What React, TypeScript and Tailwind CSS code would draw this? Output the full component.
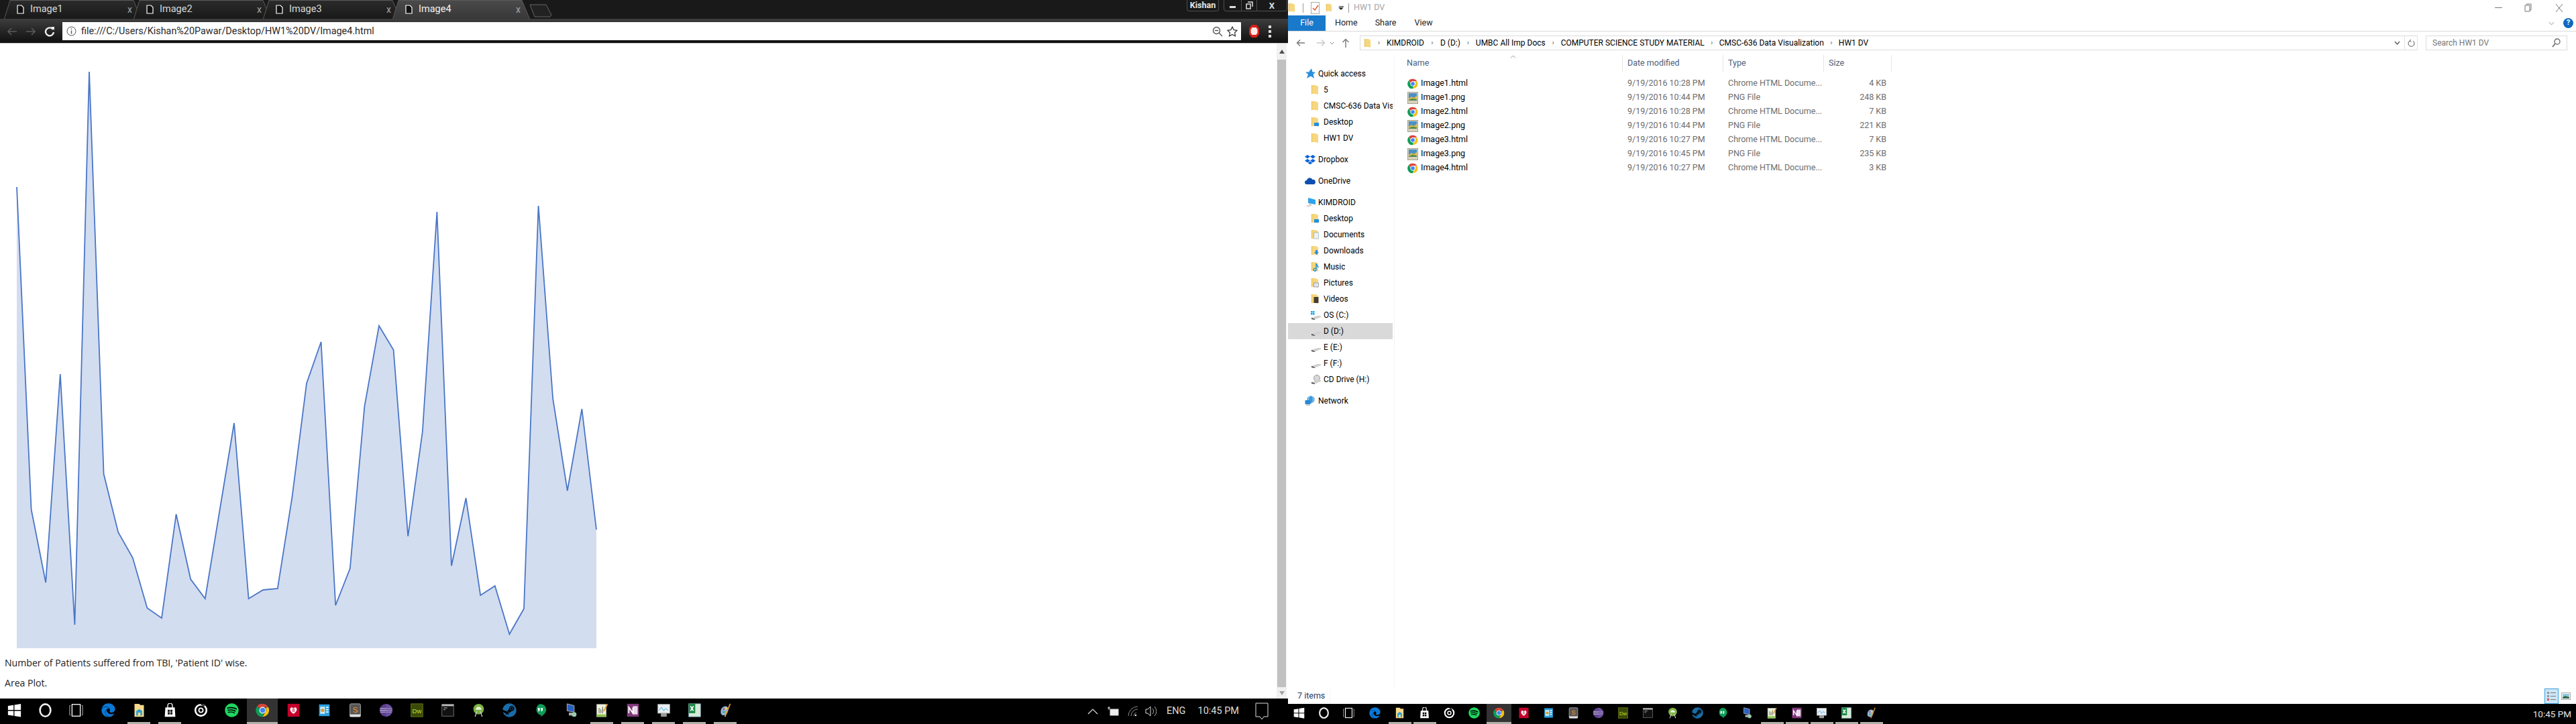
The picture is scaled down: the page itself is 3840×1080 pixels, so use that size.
import React from 'react';
import { FaEdge, FaSpotify, FaSteam } from 'react-icons/fa';

const ys = [279,760,869,558,932,107,707,794,832,907,922,767,864,893,762,631,893,880,878,742,572,510,903,848,606,486,522,800,644,316,844,743,888,874,946,908,307,595,732,610,790];
const pts = ys.map((y, i) => `${(25 + 21.6 * i).toFixed(1)},${y - 65}`).join(' ');

function ChromeIcon({ s = 16 }: { s?: number }) {
  return (
    <svg width={s} height={s} viewBox="0 0 24 24" className="shrink-0">
      <path d="M12 1a11 11 0 0 1 9.5 5.5H12a5.5 5.5 0 0 0-5 3.2L3.2 4.6A11 11 0 0 1 12 1z" fill="#db4437" />
      <path d="M21.5 6.5A11 11 0 0 1 12 23l4.6-7.9A5.5 5.5 0 0 0 17 8z" fill="#f4c20d" />
      <path d="M12 23A11 11 0 0 1 3.200 4.600L7.400 12a5.500 5.500 0 0 0 6.600 5z" fill="#0f9d58" />
      <circle cx="12" cy="12" r="5" fill="#4285f4" stroke="#fff" strokeWidth="1.300" />
    </svg>
  );
}

function PngIcon() {
  return (
    <svg width="16" height="18" viewBox="0 0 16 18" className="shrink-0">
      <rect x="0.500" y="0.500" width="15" height="17" fill="#d8d0bd" stroke="#a9a28f" />
      <rect x="2" y="2" width="12" height="11" fill="#4a90c8" />
      <path d="M2 10l4-3 3 2 5-3v7H2z" fill="#d8b94a" />
      <path d="M2 12l5-2 7 1v2H2z" fill="#4f8a4a" />
    </svg>
  );
}

function Folder({ w = 12, h = 16, overlay }: { w?: number; h?: number; overlay?: React.ReactNode }) {
  return (
    <svg width={w} height={h} viewBox="0 0 12 16" className="shrink-0">
      <path d="M1 1h6l4 2v12l-4-1H1z" fill="#f6d77f" />
      <path d="M1 1v13h1V1z" fill="#e6b84e" />
      {overlay}
    </svg>
  );
}

function SubIcon({ kind }: { kind: string }) {
  if (kind === 'desktop') return <Folder overlay={<rect x="5" y="9" width="7" height="5" fill="#1e90e8" />} />;
  if (kind === 'docs') return <Folder overlay={<rect x="4.500" y="5" width="7" height="9" fill="#eef2f6" stroke="#8aa" strokeWidth="0.600" />} />;
  if (kind === 'down') return <Folder overlay={<path d="M7 7h3v3h2l-3.500 4L5 10h2z" fill="#2a8ae0" />} />;
  if (kind === 'music') return <Folder overlay={<path d="M8 3c0 3 3 3 3 6M8 3v9a2 2 0 1 1-1-1.500" stroke="#1e90e8" strokeWidth="1.500" fill="none" />} />;
  if (kind === 'pics') return <Folder overlay={<rect x="4.500" y="8" width="7" height="6" fill="#dfe7ee" stroke="#778" strokeWidth="0.600" />} />;
  if (kind === 'vids') return <Folder overlay={<rect x="4.500" y="5" width="7" height="9" fill="#443c30" />} />;
  return <Folder />;
}

function Drive({ win, cd }: { win?: boolean; cd?: boolean }) {
  return (
    <svg width="16" height="16" viewBox="0 0 16 16" className="shrink-0">
      {win && <path d="M0 2h2.500v2.500H0zM3 2h2.500v2.500H3zM0 5h2.500v2.500H0zM3 5h2.500v2.500H3z" fill="#14a8ea" />}
      {cd && <circle cx="9" cy="6" r="4.500" fill="#d8d8d8" stroke="#999" />}
      <path d="M1 12l9-3h5v2L5 15 1 14z" fill="#d0d0d0" />
      <path d="M1 12l5 2v1l-5-1z" fill="#444" />
    </svg>
  );
}

function TopIcon({ kind }: { kind: string }) {
  if (kind === 'star')
    return (
      <svg width="16" height="18" viewBox="0 0 16 16" className="shrink-0">
        <path d="M10 0l1.500 5.500H16l-3.500 3.500 1.500 6-5-3.500L3 15l2-6-4-3.500h5z" fill="#2a8fdc" />
      </svg>
    );
  if (kind === 'dropbox')
    return (
      <svg width="16" height="16" viewBox="0 0 16 16" className="shrink-0">
        <path d="M4 1l4 2.500L4 6.500 0 3.700zM12 1l4 2.700-4 2.800-4-3zM4 7l4 2.800L4 12.500 0 9.800zM12 7l4 2.800-4 2.700-4-2.700zM4.500 13L8 10.800 11.500 13 8 15.200z" fill="#0d62d6" />
      </svg>
    );
  if (kind === 'onedrive')
    return (
      <svg width="16" height="12" viewBox="0 0 16 12" className="shrink-0">
        <path d="M3 11a3 3 0 0 1 0-6 4.500 4.500 0 0 1 8.500-1A3.500 3.500 0 0 1 13 11z" fill="#0d4fae" />
      </svg>
    );
  if (kind === 'pc')
    return (
      <svg width="17" height="16" viewBox="0 0 17 16" className="shrink-0">
        <path d="M5 1l11 3v7L5 9z" fill="#2ea3e8" />
        <path d="M1 13l8-2 3 1-7 3z" fill="#d8d8d8" />
        <path d="M7 9v3h2v-3z" fill="#bbb" />
      </svg>
    );
  return (
    <svg width="16" height="16" viewBox="0 0 16 16" className="shrink-0">
      <circle cx="9" cy="6" r="5.500" fill="#3d9cdc" />
      <path d="M7 1c-2 3-2 7 0 10M11 1c2 3 2 7 0 10" stroke="#cfe8f7" strokeWidth="0.800" fill="none" />
      <rect x="0.500" y="7" width="8" height="6" fill="#2b87d6" />
      <rect x="2" y="13.500" width="6" height="1.500" fill="#bbb" />
    </svg>
  );
}

function TaskIcon({ name, s }: { name: string; s: number }) {
  const t = 'Liberation Sans, sans-serif';
  switch (name) {
    case 'win':
      return <svg width={s} height={s} viewBox="0 0 24 24"><path d="M1 4.500l9.500-1.500v8.500H1zM12 2.800L23 1v10.500H12zM1 13h9.500v8.500L1 20zM12 13h11v10.500L12 21.700z" fill="#fff" /></svg>;
    case 'cortana':
      return <svg width={s} height={s} viewBox="0 0 24 24"><ellipse cx="12" cy="12" rx="9" ry="10.500" fill="none" stroke="#eee" strokeWidth="3" /></svg>;
    case 'task':
      return <svg width={s} height={s} viewBox="0 0 24 24"><rect x="5" y="2" width="14" height="20" fill="none" stroke="#fff" strokeWidth="1.500" /><path d="M2.500 4H1v16h1.500M21.500 4H23v16h-1.500" fill="none" stroke="#ccc" /></svg>;
    case 'edge':
      return <FaEdge size={s} color="#0a78d7" />;
    case 'explorer':
      return <svg width={s} height={s} viewBox="0 0 24 24"><path d="M4 1h8l2 2h6v20H4z" fill="#f7d98a" /><path d="M7 21V13l5-3 5 3v8h-3v-5h-4v5z" fill="#2aa0d8" /></svg>;
    case 'store':
      return <svg width={s} height={s} viewBox="0 0 24 24"><path d="M4 7h16l1 16H3z" fill="#fff" /><path d="M8 8V4a4 4 0 0 1 8 0v4" fill="none" stroke="#fff" strokeWidth="1.500" /><path d="M8 11h3.500v3.500H8zM12.500 11H16v3.500h-3.500zM8 15.500h3.500V19H8zM12.500 15.500H16V19h-3.500z" fill="#000" /></svg>;
    case 'groove':
      return <svg width={s} height={s} viewBox="0 0 24 24"><circle cx="12" cy="12" r="9.500" fill="none" stroke="#fff" strokeWidth="3" /><circle cx="12" cy="12" r="3.500" fill="none" stroke="#fff" strokeWidth="2" /><path d="M12 1l6 4" stroke="#000" strokeWidth="2" /></svg>;
    case 'spotify':
      return <FaSpotify size={s} color="#1ed760" />;
    case 'chrome':
      return <ChromeIcon s={s} />;
    case 'iheart':
      return <svg width={s} height={s} viewBox="0 0 24 24"><rect x="2" y="1" width="20" height="22" fill="#c6002b" /><path d="M12 18c-8-5-6-11-3-11 2 0 3 2 3 2s1-2 3-2c3 0 5 6-3 11z" fill="#fff" /><path d="M11 9v6M13 9v6" stroke="#c6002b" /></svg>;
    case 'outlook':
      return <svg width={s} height={s} viewBox="0 0 24 24"><rect x="3" y="2" width="18" height="20" fill="#2a9fe0" /><rect x="5" y="6" width="8" height="12" fill="#cdebf8" /><circle cx="9" cy="12" r="3" fill="#e09a30" /><path d="M15 7h4M15 11h4M15 15h4" stroke="#fff" strokeWidth="2" /></svg>;
    case 'sublime':
      return <svg width={s} height={s} viewBox="0 0 24 24"><rect x="3" y="1" width="18" height="22" rx="2" fill="#555" stroke="#bbb" /><rect x="3" y="19" width="18" height="4" fill="#ddd" /><text x="12" y="16" fontSize="13" fontFamily={t} fill="#f59a23" textAnchor="middle">S</text></svg>;
    case 'eclipse':
      return <svg width={s} height={s} viewBox="0 0 24 24"><circle cx="12" cy="12" r="11" fill="#5b3f8f" /><path d="M1.500 9h21M1.500 12h21M2 15h20" stroke="#ddd" /><path d="M12 1a11 11 0 0 1 0 22" fill="#7a5fb0" opacity="0.500" /></svg>;
    case 'dw':
      return <svg width={s} height={s} viewBox="0 0 24 24"><rect x="2" y="1" width="20" height="22" fill="#3a4a08" stroke="#6d7f1a" /><text x="12" y="17" fontSize="11" fontFamily={t} fill="#c6dd33" textAnchor="middle">Dw</text></svg>;
    case 'cmd':
      return <svg width={s} height={s} viewBox="0 0 24 24"><rect x="2" y="2" width="20" height="20" fill="#111" stroke="#777" /><rect x="2" y="2" width="20" height="3" fill="#bbb" /><path d="M5 8h6M5 11h3" stroke="#ddd" /></svg>;
    case 'android':
      return <svg width={s} height={s} viewBox="0 0 24 24"><circle cx="12" cy="10" r="9" fill="#7cb342" /><path d="M7 11a5 5 0 0 1 10 0z" fill="#e8f0d8" /><path d="M9 14l-3 9M15 14l3 9" stroke="#ccc" strokeWidth="1.500" /></svg>;
    case 'steam':
      return <FaSteam size={s} color="#1b6ca8" />;
    case 'hangouts':
      return <svg width={s} height={s} viewBox="0 0 24 24"><path d="M12 1a10 10 0 0 1 10 10c0 5-5 9-9 12v-3a9.500 9.500 0 0 1-1 0 10 10 0 0 1 0-19z" fill="#0f9d58" /><path d="M8 8h3v4l-1.500 2H8l1-2H8zM13 8h3v4l-1.500 2H13l1-2h-1z" fill="#fff" /></svg>;
    case 'monitor':
      return <svg width={s} height={s} viewBox="0 0 24 24"><path d="M5 1l12 3v11L5 13z" fill="#2a60c0" stroke="#bbb" /><path d="M8 16h8v5H8z" fill="#aaa" /><circle cx="17" cy="19" r="4" fill="#9ca" /></svg>;
    case 'notepad':
      return <svg width={s} height={s} viewBox="0 0 24 24"><rect x="3" y="2" width="16" height="21" fill="#eef3d8" stroke="#aaa" /><path d="M7 8v9M10 10v7M13 6v11" stroke="#444" /><path d="M3 19h16v4H3z" fill="#8bc34a" /><path d="M20 1l2 1-6 12-2-1z" fill="#e09a30" /></svg>;
    case 'onenote':
      return <svg width={s} height={s} viewBox="0 0 24 24"><rect x="2" y="1" width="20" height="22" fill="#80397b" /><rect x="12" y="5" width="8" height="14" fill="#e8d8e6" /><path d="M5 17V7l7 10V7" stroke="#fff" strokeWidth="2" fill="none" /></svg>;
    case 'chart':
      return <svg width={s} height={s} viewBox="0 0 24 24"><rect x="2" y="2" width="20" height="15" fill="#e8eef2" stroke="#bbb" /><path d="M4 12l4-5 4 6 3-4 4 3" stroke="#2a9fe0" fill="none" /><path d="M7 17h10v6H7z" fill="#9a9a9a" /></svg>;
    case 'excel':
      return <svg width={s} height={s} viewBox="0 0 24 24"><rect x="2" y="1" width="20" height="22" fill="#d5ead8" stroke="#8ab" /><path d="M2 1h11v16H2z" fill="#1e8a48" /><path d="M5 5l5 8M10 5l-5 8" stroke="#fff" strokeWidth="2" /></svg>;
    default:
      return <svg width={s} height={s} viewBox="0 0 24 24"><path d="M12 5c-6 0-9 6-8 12 1 4 7 5 10 1 4-5 4-13-2-13z" fill="#8fb4d8" /><circle cx="9" cy="10" r="1.500" fill="#e33" /><circle cx="13" cy="9" r="1.500" fill="#fd3" /><circle cx="9" cy="15" r="1.500" fill="#3a3" /><path d="M20 1l-9 22" stroke="#e09a30" strokeWidth="2" /></svg>;
  }
}

const taskNames = ['win','cortana','task','edge','explorer','store','groove','spotify','chrome','iheart','outlook','sublime','eclipse','dw','cmd','android','steam','hangouts','monitor','notepad','onenote','chart','excel','paint'];
const running = ['explorer','store','chrome','notepad','onenote','chart','excel','paint'];

function TaskSlot({ name, w, s, h }: { name: string; w: string; s: number; h: string }) {
  const active = name === 'chrome';
  const on = running.includes(name);
  const shift = name === 'win' || name === 'cortana' || name === 'task' ? 'pr-1' : '';
  return (
    <div className={`${w} ${h} flex flex-col items-center ${active ? 'bg-[#333333]' : ''}`}>
      <div className={`flex-1 flex items-center justify-center ${shift}`}>
        <TaskIcon name={name} s={s} />
      </div>
      <div className={`h-[3px] w-[34px] ${on ? 'bg-[#b0b0a8]' : ''} ${active ? 'w-full' : ''}`} />
    </div>
  );
}

function Tab({ label, active, first }: { label: string; active?: boolean; first?: boolean }) {
  return (
    <div className={`relative h-[28px] w-[205px] flex items-center shrink-0 ${first ? '' : '-ml-[12px]'} ${active ? 'z-10' : ''}`}>
      <svg width="205" height="28" className="absolute inset-0">
        <defs>
          <linearGradient id={active ? 'tabA' : 'tabI'} x1="0" y1="0" x2="0" y2="1">
            <stop offset="0" stopColor={active ? '#4a4a4a' : '#2b2b2b'} />
            <stop offset="1" stopColor={active ? '#383838' : '#191919'} />
          </linearGradient>
        </defs>
        <path d="M0.500 28L9 0.500H193L204.500 28" fill={`url(#${active ? 'tabA' : 'tabI'})`} stroke="#5a5a5a" />
      </svg>
      <svg width="11" height="14" viewBox="0 0 11 14" className="relative ml-[19px] shrink-0">
        <path d="M1 1h6l3 3v9H1z" fill="#111" stroke="#fff" strokeWidth="1.200" />
      </svg>
      <span className={`relative ml-[9px] text-[14.5px] font-[Roboto] ${active ? 'text-[#f2f2f2]' : 'text-[#d8d8d8]'}`}>{label}</span>
      <span className="relative ml-auto mr-[14px] text-[14px] text-[#a8a8a8] font-[Roboto]">x</span>
    </div>
  );
}

function Chrome() {
  return (
    <div className="w-[1920px] h-[1042px] flex flex-col shrink-0 font-[Roboto]">
      <div className="h-[28px] bg-[#191919] flex items-start pl-[6px] shrink-0">
        <Tab label="Image1" first />
        <Tab label="Image2" />
        <Tab label="Image3" />
        <Tab label="Image4" active />
        <svg width="36" height="22" viewBox="0 0 36 22" className="mt-[6px] ml-[-1px]">
          <path d="M1 1h24l8 15-2 3H8z" fill="#222" stroke="#666" />
        </svg>
        <div className="ml-auto flex items-start pr-[1px]">
          <div className="w-[48px] h-[17px] rounded-b-[4px] border border-t-0 border-[#4d4d4d] text-[12.5px] font-bold text-[#e6e6e6] flex items-center justify-center">Kishan</div>
          <div className="ml-[7px] w-[95px] h-[17px] rounded-b-[4px] border border-t-0 border-[#4d4d4d] flex items-center text-[#ddd]">
            <div className="w-[25px] flex justify-center"><div className="w-[9px] h-[3px] bg-[#ddd] mt-[5px]" /></div>
            <div className="w-[24px] h-full border-x border-[#4d4d4d] flex justify-center items-center">
              <svg width="11" height="12" viewBox="0 0 11 12"><path d="M3 1h7v7M1 4h6v7H1z" fill="none" stroke="#ddd" strokeWidth="1.500" /></svg>
            </div>
            <div className="flex-1 text-center text-[13px] font-bold leading-none">X</div>
          </div>
        </div>
      </div>
      <div className="h-[37px] shrink-0 bg-gradient-to-b from-[#3e3e3e] to-[#101010] border-b border-[#c8c8c8] flex items-start pt-[5px]">
        <div className="w-[93px] h-[27px] flex items-center shrink-0">
          <svg width="16" height="14" viewBox="0 0 16 14" className="ml-[10px]"><path d="M15 7H2M7 2L2 7l5 5" stroke="#5a5a5a" strokeWidth="1.600" fill="none" /></svg>
          <svg width="16" height="14" viewBox="0 0 16 14" className="ml-[12px]"><path d="M1 7h13M9 2l5 5-5 5" stroke="#5a5a5a" strokeWidth="1.600" fill="none" /></svg>
          <svg width="16" height="16" viewBox="0 0 16 16" className="ml-[12px]"><path d="M13 5a6 6 0 1 0 1 4" stroke="#eee" strokeWidth="2.400" fill="none" /><path d="M10 1h5v5z" fill="#eee" /></svg>
        </div>
        <div className="w-[1757px] h-[27px] bg-white flex items-center rounded-r-[1px] shrink-0">
          <svg width="15" height="15" viewBox="0 0 15 15" className="ml-[6px]"><circle cx="7.500" cy="7.500" r="6.500" fill="none" stroke="#555" /><path d="M7.500 6.500v5M7.500 3.500v1.500" stroke="#555" strokeWidth="1.400" /></svg>
          <span className="ml-[7px] text-[14.4px] text-[#2b2b2b] whitespace-nowrap">file:///C:/Users/Kishan%20Pawar/Desktop/HW1%20DV/Image4.html</span>
          <svg width="16" height="16" viewBox="0 0 16 16" className="ml-auto"><circle cx="6.500" cy="6.500" r="5" fill="none" stroke="#555" strokeWidth="1.400" /><path d="M4 6.500h5M10 10l5 5" stroke="#555" strokeWidth="1.400" /></svg>
          <svg width="16" height="16" viewBox="0 0 16 16" className="ml-[6px] mr-[5px]"><path d="M8 1l2.200 4.600 5 .7-3.600 3.500.9 5L8 12.400l-4.500 2.400.9-5L.8 6.300l5-.7z" fill="none" stroke="#333" strokeWidth="1.200" /></svg>
        </div>
        <div className="flex-1 flex items-center h-[27px]">
          <svg width="17" height="21" viewBox="0 0 17 21" className="ml-[11px]"><path d="M5 1h7l4 5v9l-4 5H5l-4-5V6z" fill="#d8201a" /><path d="M5.500 5h6l2 3v5l-2 3h-6l-2-3V8z" fill="#fff" opacity="0.900" /></svg>
          <div className="ml-[13px] flex flex-col gap-[3px]">
            <div className="w-[4px] h-[4px] bg-[#ddd]" /><div className="w-[4px] h-[4px] bg-[#ddd]" /><div className="w-[4px] h-[4px] bg-[#ddd]" />
          </div>
        </div>
      </div>
      <div className="flex-1 flex bg-white min-h-0">
        <div className="w-[1903px] flex flex-col shrink-0">
          <svg width="892" height="903" className="block">
            <polygon points={`25,902 ${pts} 889,902`} fill="#d3ddf0" />
            <polyline points={pts} fill="none" stroke="#4a76c7" strokeWidth="1.800" />
          </svg>
          <p className="ml-[7px] mt-[11px] text-[14.1px] leading-[20px] text-[#222] font-['Open_Sans'] whitespace-nowrap">Number of Patients suffered from TBI, 'Patient ID' wise.</p>
          <p className="ml-[7px] mt-[10px] text-[14.1px] leading-[20px] text-[#222] font-['Open_Sans']">Area Plot.</p>
        </div>
        <div className="w-[17px] bg-[#f1f1f1] flex flex-col items-center shrink-0 border-r-2 border-white">
          <div className="h-[24px] flex items-center justify-center shrink-0 text-[#505050]">
            <div className="w-0 h-0 border-x-[4px] border-x-transparent border-b-[6px] border-b-[#505050]" />
          </div>
          <div className="flex-1 w-[13px] bg-[#c1c1c1]" />
          <div className="h-[17px] flex items-center justify-center shrink-0">
            <div className="w-0 h-0 border-x-[4px] border-x-transparent border-t-[6px] border-t-[#a3a3a3]" />
          </div>
        </div>
      </div>
    </div>
  );
}

const files: [string, string, string, string][] = [
  ['Image1.html','9/19/2016 10:28 PM','Chrome HTML Docume...','4 KB'],
  ['Image1.png','9/19/2016 10:44 PM','PNG File','248 KB'],
  ['Image2.html','9/19/2016 10:28 PM','Chrome HTML Docume...','7 KB'],
  ['Image2.png','9/19/2016 10:44 PM','PNG File','221 KB'],
  ['Image3.html','9/19/2016 10:27 PM','Chrome HTML Docume...','7 KB'],
  ['Image3.png','9/19/2016 10:45 PM','PNG File','235 KB'],
  ['Image4.html','9/19/2016 10:27 PM','Chrome HTML Docume...','3 KB'],
];

function SideTop({ label, kind, mt }: { label: string; kind: string; mt?: string }) {
  return (
    <div className={`h-[24px] flex items-center pl-[25px] ${mt ?? ''}`}>
      <div className="w-[20px] flex shrink-0"><TopIcon kind={kind} /></div>
      <span className="text-[12px] text-black whitespace-nowrap">{label}</span>
    </div>
  );
}

function SideSub({ label, icon, selected }: { label: string; icon: React.ReactNode; selected?: boolean }) {
  return (
    <div className={`h-[24px] mr-[2px] flex items-center pl-[34px] ${selected ? 'bg-[#d9d9d9]' : ''}`}>
      <div className="w-[19px] flex shrink-0">{icon}</div>
      <span className="text-[12px] text-black whitespace-nowrap overflow-hidden">{label}</span>
    </div>
  );
}

function Crumb({ label }: { label: string }) {
  return <span className="text-[12px] text-black whitespace-nowrap">{label}</span>;
}

function Sep({ w }: { w: string }) {
  return <span className={`${w} text-center text-[#666] text-[11px]`}>›</span>;
}

function Explorer() {
  return (
    <div className="w-[1920px] h-[1050px] bg-white flex flex-col font-[Roboto] shrink-0">
      <div className="h-[23px] flex items-center shrink-0">
        <Folder w={11} h={15} />
        <div className="w-px h-[14px] bg-[#999] ml-[11px]" />
        <svg width="13" height="18" viewBox="0 0 13 18" className="ml-[11px]"><rect x="0.500" y="0.500" width="12" height="17" fill="#fff" stroke="#aaa" /><path d="M3 9l3 3 5-7" stroke="#e0502a" strokeWidth="1.300" fill="none" /></svg>
        <div className="ml-[9px]"><Folder w={10} h={15} /></div>
        <div className="ml-[9px] flex flex-col items-center gap-[1px]">
          <div className="w-[7px] h-px bg-[#333]" />
          <div className="w-0 h-0 border-x-[4px] border-x-transparent border-t-[4px] border-t-[#333]" />
        </div>
        <div className="w-px h-[14px] bg-[#999] ml-[7px]" />
        <span className="ml-[7px] text-[12.500px] text-[#a5a5a5]">HW1 DV</span>
        <div className="ml-auto flex items-center">
          <div className="w-[11px] h-px bg-[#777]" />
          <svg width="11" height="13" viewBox="0 0 11 13" className="ml-[33px]"><path d="M3 2V1h7v9H8M1 3h7v9H1z" fill="none" stroke="#777" /></svg>
          <svg width="12" height="14" viewBox="0 0 12 14" className="ml-[35px] mr-[19px]"><path d="M1 1l10 12M11 1L1 13" stroke="#777" /></svg>
        </div>
      </div>
      <div className="h-[24px] border-b border-[#dadada] flex items-center shrink-0">
        <div className="w-[56px] h-[23px] bg-[#1979ca] text-white text-[12.500px] flex items-center justify-center">File</div>
        <span className="ml-[14px] text-[12.500px] text-[#222]">Home</span>
        <span className="ml-[26px] text-[12.500px] text-[#222]">Share</span>
        <span className="ml-[27px] text-[12.500px] text-[#222]">View</span>
        <svg width="9" height="6" viewBox="0 0 9 6" className="ml-auto"><path d="M1 1l3.500 4L8 1" stroke="#999" fill="none" /></svg>
        <div className="ml-[13px] mr-[4px] w-[15px] h-[15px] rounded-full bg-[#1068c0] text-white text-[11px] font-bold flex items-center justify-center">?</div>
      </div>
      <div className="h-[22px] mt-[6px] flex items-center shrink-0">
        <div className="w-[107px] flex items-center shrink-0">
          <svg width="14" height="12" viewBox="0 0 14 12" className="ml-[12px]"><path d="M13 6H2M6 1.500L1.500 6 6 10.500" stroke="#777" strokeWidth="1.400" fill="none" /></svg>
          <svg width="14" height="12" viewBox="0 0 14 12" className="ml-[16px]"><path d="M1 6h11M8 1.500L12.500 6 8 10.500" stroke="#c8c8c8" strokeWidth="1.400" fill="none" /></svg>
          <svg width="7" height="5" viewBox="0 0 7 5" className="ml-[6px]"><path d="M1 1l2.500 3L6 1" stroke="#888" fill="none" /></svg>
          <svg width="12" height="14" viewBox="0 0 12 14" className="ml-[11px]"><path d="M6 14V2M1.500 6L6 1.500 10.500 6" stroke="#777" strokeWidth="1.400" fill="none" /></svg>
        </div>
        <div className="w-[1577px] h-[22px] border-y border-l border-[#dcdcdc] flex items-center shrink-0">
          <div className="ml-[5px]"><Folder w={11} h={15} /></div>
          <Sep w="w-[23px]" />
          <Crumb label="KIMDROID" />
          <Sep w="w-[24px]" />
          <Crumb label="D (D:)" />
          <Sep w="w-[23px]" />
          <Crumb label="UMBC All Imp Docs" />
          <Sep w="w-[23px]" />
          <Crumb label="COMPUTER SCIENCE STUDY MATERIAL" />
          <Sep w="w-[22px]" />
          <Crumb label="CMSC-636 Data Visualization" />
          <Sep w="w-[22px]" />
          <Crumb label="HW1 DV" />
          <svg width="9" height="6" viewBox="0 0 9 6" className="ml-auto mr-[6px]"><path d="M1 1l3.500 4L8 1" stroke="#555" strokeWidth="1.300" fill="none" /></svg>
          <div className="w-[20px] h-full border-x border-[#e4e4e4] flex items-center justify-center">
            <svg width="11" height="13" viewBox="0 0 11 13"><path d="M3 3a4.500 4.500 0 1 0 5 0M5 1L3 3l2.500 1.500" stroke="#555" fill="none" /></svg>
          </div>
        </div>
        <div className="ml-[12px] w-[211px] h-[22px] border-y border-x border-[#dcdcdc] flex items-center shrink-0">
          <span className="ml-[9px] text-[12px] text-[#777]">Search HW1 DV</span>
          <svg width="13" height="14" viewBox="0 0 13 14" className="ml-auto mr-[9px]"><circle cx="8" cy="5" r="4" fill="none" stroke="#666" strokeWidth="1.300" /><path d="M5 8l-4 5" stroke="#666" strokeWidth="1.600" /></svg>
        </div>
      </div>
      <div className="flex-1 flex mt-[7px] min-h-0">
        <div className="w-[159px] border-r border-[#f4f4f4] pt-[16px] shrink-0 overflow-hidden">
          <SideTop label="Quick access" kind="star" />
          <SideSub label="5" icon={<Folder />} />
          <SideSub label="CMSC-636 Data Visualization" icon={<Folder />} />
          <SideSub label="Desktop" icon={<SubIcon kind="desktop" />} />
          <SideSub label="HW1 DV" icon={<Folder />} />
          <SideTop label="Dropbox" kind="dropbox" mt="mt-[8px]" />
          <SideTop label="OneDrive" kind="onedrive" mt="mt-[8px]" />
          <SideTop label="KIMDROID" kind="pc" mt="mt-[8px]" />
          <SideSub label="Desktop" icon={<SubIcon kind="desktop" />} />
          <SideSub label="Documents" icon={<SubIcon kind="docs" />} />
          <SideSub label="Downloads" icon={<SubIcon kind="down" />} />
          <SideSub label="Music" icon={<SubIcon kind="music" />} />
          <SideSub label="Pictures" icon={<SubIcon kind="pics" />} />
          <SideSub label="Videos" icon={<SubIcon kind="vids" />} />
          <SideSub label="OS (C:)" icon={<Drive win />} />
          <SideSub label="D (D:)" icon={<Drive />} selected />
          <SideSub label="E (E:)" icon={<Drive />} />
          <SideSub label="F (F:)" icon={<Drive />} />
          <SideSub label="CD Drive (H:)" icon={<Drive cd />} />
          <SideTop label="Network" kind="net" mt="mt-[8px]" />
        </div>
        <div className="flex-1 flex flex-col">
          <div className="h-[25px] flex items-center text-[12.500px] text-[#4c607a] shrink-0">
            <div className="relative w-[340px] h-full border-r border-[#e5e5e5] pl-[18px] flex items-center">
              Name
              <svg width="9" height="5" viewBox="0 0 9 5" className="absolute left-[172px] top-0"><path d="M1 4.500L4.500 1 8 4.500" stroke="#999" fill="none" /></svg>
            </div>
            <div className="w-[150px] h-full border-r border-[#e5e5e5] pl-[7px] flex items-center">Date modified</div>
            <div className="w-[150px] h-full border-r border-[#e5e5e5] pl-[7px] flex items-center">Type</div>
            <div className="w-[101px] h-full border-r border-[#e5e5e5] pl-[7px] flex items-center">Size</div>
          </div>
          <div className="mt-[7px] flex flex-col">
            {files.map(([n, d, t, s]) => (
              <div key={n} className="h-[21px] flex items-center text-[12.500px]">
                <div className="w-[340px] pl-[19px] flex items-center text-black">
                  <div className="w-[20px] flex shrink-0">{n.endsWith('html') ? <ChromeIcon /> : <PngIcon />}</div>
                  {n}
                </div>
                <div className="w-[150px] pl-[7px] text-[#6d6d6d]">{d}</div>
                <div className="w-[150px] pl-[7px] text-[#6d6d6d]">{t}</div>
                <div className="w-[93px] text-right text-[#6d6d6d]">{s}</div>
              </div>
            ))}
          </div>
        </div>
      </div>
      <div className="h-[23px] flex items-center shrink-0">
        <div className="w-[63px] h-full border-r border-[#f4f4f4] pl-[14px] pr-0 flex items-center text-[12.500px] text-[#1e3a5f] whitespace-nowrap">7 items</div>
        <div className="ml-auto w-[21px] h-[23px] bg-[#cde6f7] border border-[#3ba3dc] flex flex-col justify-center gap-[2px] px-[3px]">
          <div className="flex items-center gap-[2px]"><div className="w-[3px] h-[3px] border border-[#888]" /><div className="flex-1 h-px bg-[#777]" /></div>
          <div className="flex items-center gap-[2px]"><div className="w-[3px] h-[3px] border border-[#888]" /><div className="flex-1 h-px bg-[#777]" /></div>
          <div className="flex items-center gap-[2px]"><div className="w-[3px] h-[3px] border border-[#d33]" /><div className="flex-1 h-px bg-[#777]" /></div>
        </div>
        <svg width="14" height="11" viewBox="0 0 14 11" className="ml-[4px] mr-[8px]"><rect x="0.500" y="0.500" width="13" height="10" fill="#fff" stroke="#aaa" /><rect x="2" y="2" width="10" height="7" fill="#8ec8e0" /><path d="M2 7l4-2 6 2v2H2z" fill="#3a6a4a" /></svg>
      </div>
    </div>
  );
}

function App() {
  return (
    <div className="w-[3840px] h-[1080px] overflow-hidden bg-black flex flex-col">
      <div className="h-[1042px] flex shrink-0">
        <Chrome />
        <div className="h-[1050px] z-10"><Explorer /></div>
      </div>
      <div className="h-[38px] flex">
        <div className="w-[1920px] h-[38px] flex items-stretch shrink-0">
          {taskNames.map(n => <TaskSlot key={n} name={n} w="w-[46px]" s={21} h="h-[38px]" />)}
          <div className="ml-auto flex items-center h-[38px] text-[#dcdcdc] font-[Roboto] pr-[29px]">
            <svg width="16" height="9" viewBox="0 0 16 9"><path d="M1 8l7-7 7 7" stroke="#ddd" strokeWidth="1.200" fill="none" /></svg>
            <svg width="18" height="16" viewBox="0 0 18 16" className="ml-[13px]"><rect x="5" y="5" width="12" height="9" fill="#eee" stroke="#ddd" /><path d="M3 1v5M1 3h4" stroke="#eee" /></svg>
            <svg width="16" height="16" viewBox="0 0 16 16" className="ml-[13px]"><path d="M1 15A14 14 0 0 1 15 1M5 15A10 10 0 0 1 15 5M9 15a6 6 0 0 1 4-5" stroke="#888" fill="none" /><circle cx="12" cy="14" r="1.200" fill="#eee" /></svg>
            <svg width="17" height="18" viewBox="0 0 17 18" className="ml-[10px]"><path d="M1 6h3l4-4v14l-4-4H1z" fill="none" stroke="#ddd" /><path d="M11 5a6 6 0 0 1 0 8M14 2a10 10 0 0 1 0 14" stroke="#aaa" fill="none" /></svg>
            <span className="ml-[15px] text-[14.500px]">ENG</span>
            <span className="ml-[18px] text-[14.500px]">10:45 PM</span>
            <svg width="20" height="28" viewBox="0 0 20 28" className="ml-[24px]"><path d="M1 2h18v20h-6l-3 4-3-4H1z" fill="none" stroke="#ddd" /></svg>
          </div>
        </div>
        <div className="flex-1 h-[30px] mt-[8px] flex">
          {taskNames.map(n => <TaskSlot key={n} name={n} w="w-[37px]" s={17} h="h-[30px]" />)}
          <span className="ml-auto mr-[7px] self-center text-[#e4e4e4] text-[13.500px] font-[Roboto]">10:45 PM</span>
        </div>
      </div>
    </div>
  );
}

export default App;
